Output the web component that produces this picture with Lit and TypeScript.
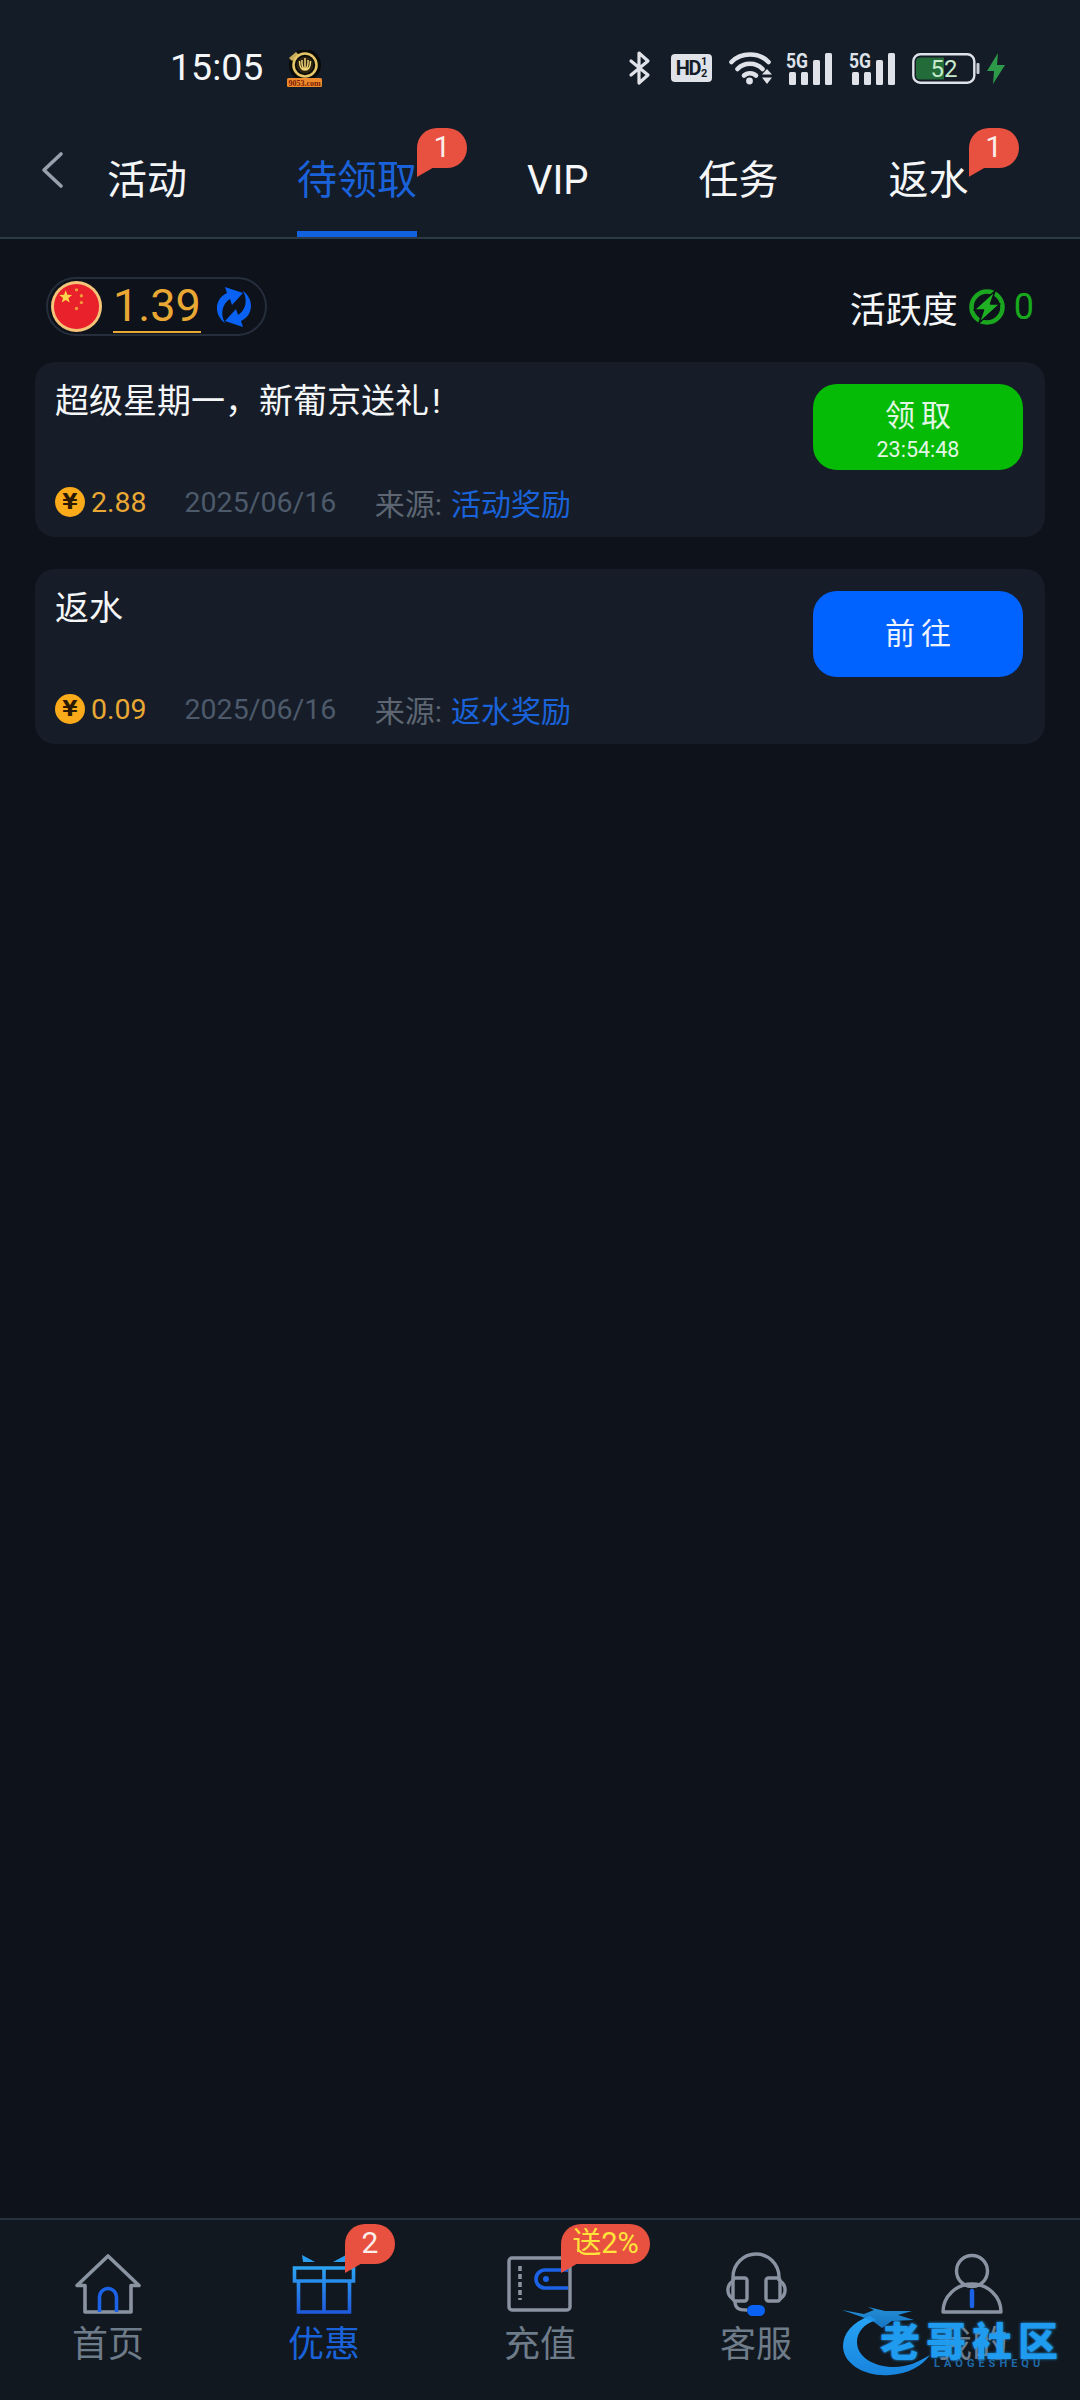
import { LitElement, html, css, svg } from "lit";
import { customElement } from "lit/decorators.js";

const I = "#8a93a2";
const B = "#1b62e6";

const statusIcons = html`
  <svg class="st bt" viewBox="0 0 22 34"><path d="M2 10 19 24 10 32V2l9 8L2 24" fill="none" stroke="#dfe2e8" stroke-width="3.2" stroke-linejoin="round" stroke-linecap="round"/></svg>
  <span class="hd"><b>HD</b><i><em>1</em><em>2</em></i></span>
  <svg class="st wifi" viewBox="0 0 44 34">
    <g fill="none" stroke="#dfe2e8" stroke-width="4.6" stroke-linecap="round"><path d="M2.500 11C12 1 30 1 39.500 11"/><path d="M8.500 18C15 11 27 11 33.500 18"/><path d="M15 24.500C18 21.500 24 21.500 27 24.500"/></g>
    <circle cx="20.500" cy="30" r="3.400" fill="#dfe2e8"/>
    <path d="M38 18l5 5.500H33zM33 26.500H43L38 33z" fill="#dfe2e8"/>
  </svg>
  ${[0, 1].map(
    () => html`<svg class="st sig" viewBox="0 0 47 33">
      <text x="0" y="16" textLength="22" lengthAdjust="spacingAndGlyphs" class="fg">5G</text>
      <rect x="3" y="20" width="7" height="13" rx="1.500" fill="#dfe2e8"/><rect x="15" y="20" width="7" height="13" rx="1.500" fill="#dfe2e8"/><rect x="27" y="8" width="7" height="25" rx="1.500" fill="#dfe2e8"/><rect x="39" y="1" width="7" height="32" rx="1.500" fill="#dfe2e8"/>
    </svg>`
  )}
  <svg class="st bat" viewBox="0 0 68 31">
    <rect x="1.300" y="1.300" width="61" height="28.400" rx="7" fill="none" stroke="#dfe2e8" stroke-width="2.400"/>
    <path d="M8 4.500H32V26.500H8a4 4 0 0 1-4-4V8.500a4 4 0 0 1 4-4z" fill="#236b38"/>
    <rect x="64.500" y="10" width="3" height="11" rx="1" fill="#c8ccd2"/>
    <text x="32" y="24" text-anchor="middle" class="batt">52</text>
  </svg>
  <svg class="st bolt" viewBox="0 0 20 31"><path d="M12 0 1 18H8L7 31 19 12H11z" fill="#2c9a49"/></svg>
`;

const logo = html`<svg class="logo" viewBox="0 0 36 37">
  <circle cx="19" cy="15" r="16" fill="#0a0a08"/>
  <path d="M3 8 10 2l3 3L6 11z" fill="#c9ad5c"/>
  <circle cx="19" cy="15" r="11.500" fill="none" stroke="#e7c668" stroke-width="2.600"/>
  <circle cx="19" cy="15" r="8.500" fill="#2c2410"/>
  <path d="M19 8v12M13.500 11c0 6 2 9 5.500 9s5.500-3 5.500-9M16 10c-.5 5 .5 8 3 10M22 10c.5 5-.5 8-3 10" fill="none" stroke="#f3d777" stroke-width="1.500"/>
  <rect x="1" y="28" width="35" height="9" rx="1.500" fill="#ee8a2b"/>
  <text x="18.500" y="35.500" text-anchor="middle" class="logot">9053.com</text>
</svg>`;

const flag = html`<svg class="flag" viewBox="0 0 52 52">
  <circle cx="26" cy="26" r="26" fill="#f4c478"/>
  <circle cx="26" cy="26" r="23" fill="#e8212b"/>
  <path d="M15 9.500l1.700 4.600 4.900.2-3.900 3 1.400 4.700-4.100-2.700-4.100 2.700 1.400-4.700-3.900-3 4.900-.2z" fill="#fbd54a"/>
  <g fill="#f09a3a"><circle cx="26" cy="9" r="1.700"/><circle cx="31" cy="15" r="1.700"/><circle cx="31" cy="22" r="1.700"/><circle cx="26" cy="28" r="1.700"/></g>
</svg>`;

const refresh = html`<svg class="refresh" viewBox="0 0 42 42">
  <g fill="#0a62f5">
    <path d="M12 37C1 29 1 13 14 7L12 1 30 7 19 19 17 13C9 18 7 28 12 37Z"/>
    <path transform="rotate(180 21 21)" d="M12 37C1 29 1 13 14 7L12 1 30 7 19 19 17 13C9 18 7 28 12 37Z"/>
  </g>
</svg>`;

const energy = html`<svg class="energy" viewBox="0 0 36 36">
  <circle cx="18" cy="18" r="15.500" fill="none" stroke="#1ba61f" stroke-width="4.500"/>
  <path d="M26 2 5 21H14.500L10 34 31 15H21.500Z" fill="#1fb023" stroke="#0d121b" stroke-width="1.600" stroke-linejoin="round"/>
</svg>`;

const yen = html`<span class="yen">¥</span>`;

const home = html`<svg class="ni" viewBox="0 0 70 64">
  <path d="M4 33.500 35 4 66 33.500H58V60H12V33.500Z" fill="none" stroke="${I}" stroke-width="3.600" stroke-linejoin="round"/>
  <path d="M26.500 60V45a8.500 8.500 0 0 1 17 0V60" fill="none" stroke="${B}" stroke-width="3.600"/>
</svg>`;

const gift = html`<svg class="ni" viewBox="0 0 70 64">
  <defs><linearGradient id="gg" x1="0" y1="0" x2="0" y2="1"><stop offset="0" stop-color="#2ca3f2"/><stop offset="1" stop-color="#1f5bdd"/></linearGradient></defs>
  <path d="M13 3 26 10H14ZM57 3 44 10H56Z" fill="#2a9cf0"/>
  <path d="M5.500 16H64.500V29H5.500ZM9.500 29V60H60.500V29M35 16V60" fill="none" stroke="url(#gg)" stroke-width="3.600"/>
</svg>`;

const wallet = html`<svg class="ni" viewBox="0 0 70 64">
  <rect x="4" y="6" width="61" height="52" rx="3" fill="none" stroke="${I}" stroke-width="3.400"/>
  <path d="M15 14V48" stroke="${I}" stroke-width="3.600" stroke-dasharray="5 3"/>
  <path d="M63 18H40a9 9 0 0 0 0 18H63" fill="none" stroke="${B}" stroke-width="3.600"/>
  <circle cx="41" cy="27" r="3" fill="${B}"/>
</svg>`;

const headset = html`<svg class="ni" viewBox="0 0 70 64">
  <g fill="none" stroke="${I}" stroke-width="3.400">
    <path d="M12 29V25a23 23 0 0 1 46 0V29"/>
    <rect x="12" y="26" width="14" height="23" rx="2.500"/><rect x="45" y="26" width="14" height="23" rx="2.500"/>
    <path d="M12 29a10.500 10.500 0 0 0 0 18M59 29a10.500 10.500 0 0 1 0 18"/>
    <path d="M14 49c0 7 3 9 12 9"/>
  </g>
  <rect x="26" y="53" width="18" height="11" rx="5.500" fill="#0a62f5"/>
</svg>`;

const person = html`<svg class="ni" viewBox="0 0 70 64">
  <circle cx="35" cy="19" r="15.500" fill="none" stroke="${I}" stroke-width="3.400"/>
  <path d="M6 60a29 28 0 0 1 58 0Z" fill="none" stroke="${I}" stroke-width="3.400" stroke-linejoin="round"/>
  <path d="M35 39V54" stroke="${B}" stroke-width="4.500" stroke-linecap="round"/>
</svg>`;

const mark = svg`<defs><linearGradient id="wm" x1="0" y1="0" x2="0" y2="1"><stop offset="0" stop-color="#27a4f6"/><stop offset="1" stop-color="#1884dd"/></linearGradient></defs>
  <path d="M30 14C12 20 3 32 3 44C3 62 25 75 50 73C68 72 82 64 90 53C78 60 68 65 54 65C34 65 17 55 17 40C17 30 24 22 36 18Z" fill="url(#wm)"/>
  <path d="M2 8 24 12 34 8 28 5 45 9 72 9 58 13 74 18 52 19 42 26 34 20 22 15Z" fill="url(#wm)" opacity=".85"/>`;

@customElement("app-root")
export class AppRoot extends LitElement {
  static styles = css`
    :host {
      display: flex;
      flex-direction: column;
      width: 1080px;
      height: 2400px;
      overflow: hidden;
      background: #0d121b;
      color: #f4f6f8;
      font-family: Roboto, "Noto Sans CJK SC", sans-serif;
    }
    .head { background: #141c28; border-bottom: 2px solid #2a3a47; flex: none; }
    .status { height: 136px; display: flex; align-items: center; padding: 0 74px 0 170px; }
    .time { font-size: 37.500px; line-height: 1; margin-right: 23px; }
    .logo { width: 36px; height: 37px; }
    .logot { font: 700 8px "Liberation Serif", serif; fill: #7a1a05; }
    .sys { margin-left: auto; display: flex; align-items: center; }
    .st { display: block; flex: none; overflow: visible; }
    .bt { width: 22px; height: 34px; margin-right: 20px; }
    .hd { width: 41px; height: 28px; border-radius: 4px; background: #dfe2e8; color: #141c28; display: flex; align-items: center; justify-content: center; gap: 1px; margin-right: 17px; }
    .hd b { font: 700 20px/1 Roboto, sans-serif; letter-spacing: -1.500px; }
    .hd i { display: flex; flex-direction: column; font: 700 11px/12px Roboto, sans-serif; }
    .hd em { font-style: normal; }
    .wifi { width: 44px; height: 34px; margin-right: 13px; }
    .sig { width: 47px; height: 33px; margin-right: 16px; }
    .fg { font: 700 20px Roboto, sans-serif; fill: #dfe2e8; }
    .bat { width: 68px; height: 31px; margin-right: 6px; }
    .batt { font: 400 24px Roboto, sans-serif; fill: #c6eacb; }
    .bolt { width: 20px; height: 31px; }

    .tabs { display: flex; height: 101px; gap: 110px; position: relative; }
    .back { position: absolute; left: 40px; top: 15px; width: 24px; height: 38px; }
    .tabs .first { margin-left: 107px; }
    .tab { position: relative; flex: none; font-size: 40px; line-height: 90px; height: 90px; white-space: nowrap; }
    .tab.on { color: #1a62d9; }
    .tab.on::after { content: ""; position: absolute; left: 0; right: 0; bottom: -11px; height: 6px; background: #1262e0; }
    .badge {
      position: absolute;
      height: 40px;
      min-width: 50px;
      box-sizing: border-box;
      padding: 0 10px;
      border-radius: 20px 20px 20px 0;
      background: #e8503f;
      color: #fbeeea;
      font-size: 30px;
      line-height: 38px;
      text-align: center;
      white-space: nowrap;
    }
    .badge::after {
      content: "";
      position: absolute;
      left: 0;
      top: 26px;
      width: 16px;
      height: 23px;
      background: #e8503f;
      clip-path: polygon(0 0, 100% 0, 100% 60%, 0 100%);
    }
    .tab .badge { left: 100%; top: -8px; }

    .main { flex: 1; padding-top: 38px; }
    .tools { display: flex; align-items: center; justify-content: space-between; height: 59px; padding: 0 46px; margin-bottom: 26px; }
    .pill { display: flex; align-items: center; box-sizing: border-box; height: 59px; width: 221px; padding-left: 3px; border: 2px solid #262e3c; border-radius: 30px; }
    .flag { width: 51px; height: 51px; flex: none; }
    .amt { font-size: 45px; line-height: 50px; color: #e9a834; margin-left: 11px; border-bottom: 2px solid #e9a834; }
    .refresh { width: 42px; height: 42px; margin-left: 12px; flex: none; }
    .act { display: flex; align-items: center; font-size: 36px; padding-left: 2px; }
    .energy { width: 36px; height: 36px; margin: 0 9px 0 11px; }
    .act b { font-weight: 400; color: #18a81c; font-size: 36px; }

    .list { display: flex; flex-direction: column; gap: 32px; margin: 0 35px; }
    .card { height: 175px; box-sizing: border-box; background: #161d28; border-radius: 20px; padding: 22px 22px 0 20px; }
    .top { display: flex; justify-content: space-between; align-items: flex-start; height: 86px; }
    .title { font-size: 34px; line-height: 34px; }
    .bang { margin-left: 3px; }
    .btn { width: 210px; height: 86px; border-radius: 24px; display: flex; flex-direction: column; align-items: center; justify-content: center; color: #e2f6e4; font-size: 30px; letter-spacing: 6px; text-indent: 6px; line-height: 40px; }
    .btn small { font-size: 21.500px; letter-spacing: 0; text-indent: 0; line-height: 28px; }
    .btn.g { background: #06bb06; padding-top: 5px; box-sizing: border-box; }
    .btn.b { background: #0062ff; color: #eef3ff; }
    .meta { display: flex; align-items: center; height: 34px; margin-top: 15px; font-size: 28.500px; }
    .yen { position: relative; width: 30px; height: 30px; border-radius: 50%; background: #fbaa1a; color: #2b1a02; font: 700 22px/30px "DejaVu Sans", sans-serif; text-align: center; flex: none; }
    .money { color: #e9a834; margin-left: 6px; }
    .date { color: #4d5a6b; margin-left: 38px; }
    .src { color: #5d6672; margin-left: 38.500px; font-size: 30px; }
    .src span { color: #1a62d9; margin-left: 9px; }

    .nav { position: relative; flex: none; display: grid; grid-template-columns: repeat(5, 216px); height: 180px; background: #111820; border-top: 2px solid #26323d; }
    .item { position: relative; display: flex; flex-direction: column; align-items: center; padding-top: 32px; color: #6e7b89; font-size: 36px; line-height: 46px; }
    .item.on { color: #1a62d9; }
    .ni { width: 70px; height: 64px; margin-bottom: 6px; display: block; }
    .item .badge { left: 129px; top: 4px; }
    .item .y { color: #ffe23a; font-size: 29px; padding: 0 7px; width: 89px; left: 129px; }

    .wm { position: absolute; left: 840px; top: 82px; width: 240px; height: 100px; }
    .wm svg { position: absolute; left: 0; top: 0; width: 100px; height: 80px; }
    .wmt { position: absolute; left: 40px; top: 19px; font-size: 40px; font-weight: 900; line-height: 44px; letter-spacing: 6px; color: #1f9cf0; white-space: nowrap; text-shadow: 0 0 3px #1f9cf0; }
    .wms { position: absolute; left: 94px; top: 56px; font-size: 11px; line-height: 12px; letter-spacing: 4px; font-weight: 700; color: #1f6aa8; white-space: nowrap; }
  `;

  private card(title: string, bang: string, amount: string, source: string, go: boolean) {
    return html`<div class="card">
      <div class="top">
        <div class="title">${title}<span class="bang">${bang}</span></div>
        ${go
          ? html`<div class="btn b">前往</div>`
          : html`<div class="btn g">领取<small>23:54:48</small></div>`}
      </div>
      <div class="meta">
        ${yen}
        <span class="money">${amount}</span>
        <span class="date">2025/06/16</span>
        <span class="src">来源:<span>${source}</span></span>
      </div>
    </div>`;
  }

  render() {
    return html`
      <header class="head">
        <div class="status">
          <span class="time">15:05</span>
          ${logo}
          <div class="sys">${statusIcons}</div>
        </div>
        <nav class="tabs">
          <svg class="back" viewBox="0 0 24 38"><path d="M21 3 4 19 21 35" fill="none" stroke="#98a1ad" stroke-width="3.600" stroke-linecap="round" stroke-linejoin="round"/></svg>
          <div class="tab first">活动</div>
          <div class="tab on">待领取<span class="badge">1</span></div>
          <div class="tab">VIP</div>
          <div class="tab">任务</div>
          <div class="tab">返水<span class="badge">1</span></div>
        </nav>
      </header>
      <main class="main">
        <div class="tools">
          <div class="pill">${flag}<span class="amt">1.39</span>${refresh}</div>
          <div class="act">活跃度${energy}<b>0</b></div>
        </div>
        <div class="list">
          ${this.card("超级星期一，新葡京送礼", "!", "2.88", "活动奖励", false)}
          ${this.card("返水", "", "0.09", "返水奖励", true)}
        </div>
      </main>
      <footer class="nav">
        <div class="item">${home}首页</div>
        <div class="item on">${gift}优惠<span class="badge">2</span></div>
        <div class="item">${wallet}充值<span class="badge y">送2%</span></div>
        <div class="item">${headset}客服</div>
        <div class="item">${person}我的</div>
        <div class="wm">
          <svg viewBox="0 0 100 80">${mark}</svg>
          <div class="wmt">老哥社区</div>
          <div class="wms">LAOGESHEQU</div>
        </div>
      </footer>
    `;
  }
}
